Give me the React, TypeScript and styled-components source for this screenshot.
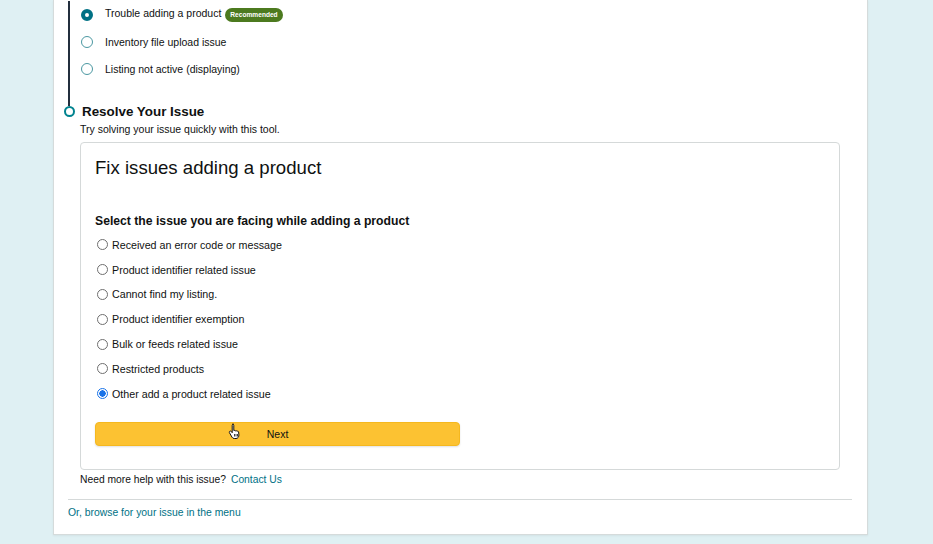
import React from 'react';
import styled, { createGlobalStyle } from 'styled-components';

const GlobalStyle = createGlobalStyle`
  html, body {
    margin: 0;
    padding: 0;
    background: #dff0f3;
  }
  body {
    font-family: "Liberation Sans", Arial, sans-serif;
    color: #0f1111;
  }
`;

const Page = styled.div`
  padding-left: 53px;
  height: 544px;
  overflow: hidden;
`;

const Panel = styled.div`
  width: 784px;
  background: #fff;
  border: 1px solid #d5dbdb;
  border-top: none;
  padding: 1px 15px 13px 14px;
  box-shadow: 0 1px 2px rgba(0, 0, 0, 0.06);
`;

const Timeline = styled.div`
  display: grid;
  grid-template-columns: 2px 1fr;
  column-gap: 10px;
`;

const Rail = styled.div`
  display: flex;
  flex-direction: column;
  align-items: center;
`;

const Line = styled.div<{ $fill?: boolean; $h?: number }>`
  width: 2px;
  background: #232f3e;
  flex: ${(p) => (p.$fill ? '1' : 'none')};
  height: ${(p) => (p.$h ? `${p.$h}px` : 'auto')};
`;

const StepDot = styled.div`
  flex: none;
  width: 11px;
  height: 11px;
  box-sizing: border-box;
  border: 2px solid #00838f;
  border-radius: 50%;
  background: #fff;
`;

const OptionList = styled.div`
  padding-left: 1px;
  padding-bottom: 19px;
`;

const OptionRow = styled.div`
  display: flex;
  align-items: center;
  height: 27px;
  font-size: 10.5px;
  gap: 12px;
`;

const TealRadio = styled.span<{ $on?: boolean }>`
  width: 12px;
  height: 12px;
  box-sizing: border-box;
  border-radius: 50%;
  border: ${(p) => (p.$on ? '4px solid #007185' : '1.5px solid #4b98a2')};
  background: #fff;
  flex: none;
`;

const Badge = styled.span`
  display: inline-flex;
  align-items: center;
  height: 14px;
  padding: 0 5px;
  margin-left: 4px;
  border-radius: 7px;
  background: #4c7a1f;
  color: #fff;
  font-size: 6.6px;
  font-weight: 700;
`;

const StepTitle = styled.div`
  font-size: 13.4px;
  font-weight: 700;
  line-height: 20px;
  padding: 1px 0 0 2px;
`;

const StepSub = styled.div`
  font-size: 10.5px;
  line-height: 14px;
`;

const Card = styled.div`
  margin: 6px 12px 0 0;
  border: 1px solid #d5d9d9;
  border-radius: 4px;
  padding: 13px 14px 23px 14px;
`;

const CardTitle = styled.div`
  font-size: 18.6px;
  line-height: 24px;
`;

const Question = styled.div`
  margin-top: 32px;
  font-size: 12.2px;
  font-weight: 700;
  line-height: 18px;
`;

const ChoiceList = styled.div`
  margin-top: 2.5px;
`;

const Choice = styled.label`
  display: flex;
  align-items: center;
  height: 24.8px;
  padding-left: 2px;
  gap: 4px;
  font-size: 10.7px;
`;

const NativeRadio = styled.span<{ $on?: boolean }>`
  width: 11px;
  height: 11px;
  box-sizing: border-box;
  border-radius: 50%;
  border: 1px solid ${(p) => (p.$on ? '#1a73e8' : '#6f6f6f')};
  background: ${(p) => (p.$on ? 'radial-gradient(circle, #1a73e8 0 3px, #fff 3.4px)' : '#fff')};
  flex: none;
`;

const NextButton = styled.button`
  position: relative;
  display: block;
  margin-top: 15.5px;
  width: 365px;
  height: 24px;
  border: 1px solid #f5b81f;
  border-radius: 4px;
  background: #fcc232;
  box-shadow: 0 1px 2px rgba(0, 0, 0, 0.12);
  font-family: inherit;
  font-size: 10.5px;
  color: #0f1111;
  padding: 0;
`;

const Cursor = styled.svg`
  position: absolute;
  left: 132px;
  top: 0;
  width: 14px;
  height: 16px;
`;

const HelpLine = styled.div`
  margin-top: 2px;
  font-size: 10.3px;
  line-height: 16px;
`;

const Link = styled.a`
  color: #007185;
  text-decoration: none;
  margin-left: 5px;
`;

const Divider = styled.hr`
  margin: 11px 0 0;
  border: none;
  border-top: 1px solid #d5d9d9;
`;

const BrowseLink = styled.a`
  display: block;
  margin-top: 5px;
  font-size: 10.4px;
  line-height: 16px;
  color: #007185;
  text-decoration: none;
`;

const topOptions = [
  { label: 'Trouble adding a product', on: true, badge: true },
  { label: 'Inventory file upload issue' },
  { label: 'Listing not active (displaying)' },
];

const choices = [
  'Received an error code or message',
  'Product identifier related issue',
  'Cannot find my listing.',
  'Product identifier exemption',
  'Bulk or feeds related issue',
  'Restricted products',
  'Other add a product related issue',
];

function App(): React.ReactElement {
  const picked = choices.length - 1;
  return (
    <Page>
      <GlobalStyle />
      <Panel>
        <Timeline>
          <Rail>
            <Line $fill />
          </Rail>
          <OptionList>
            {topOptions.map((o) => (
              <OptionRow key={o.label}>
                <TealRadio $on={o.on} />
                <span>
                  {o.label}
                  {o.badge && <Badge>Recommended</Badge>}
                </span>
              </OptionRow>
            ))}
          </OptionList>

          <Rail>
            <Line $h={5} />
            <StepDot />
          </Rail>
          <div>
            <StepTitle>Resolve Your Issue</StepTitle>
            <StepSub>Try solving your issue quickly with this tool.</StepSub>
            <Card>
              <CardTitle>Fix issues adding a product</CardTitle>
              <Question>Select the issue you are facing while adding a product</Question>
              <ChoiceList>
                {choices.map((c, i) => (
                  <Choice key={c}>
                    <NativeRadio $on={i === picked} />
                    {c}
                  </Choice>
                ))}
              </ChoiceList>
              <NextButton>
                Next
                <Cursor viewBox="0 0 14 16">
                  <path
                    d="M4.5 1.2c.8 0 1.3.6 1.3 1.3v5l.3-.1c.6-.3 1.3 0 1.5.5.5-.3 1.2-.1 1.5.4.5-.3 1.3 0 1.5.6l.3 3c.1 1.8-1 3.6-2.9 3.6H6.3c-1 0-1.8-.5-2.3-1.3L1.5 9.8c-.4-.6-.2-1.3.4-1.6.5-.3 1.1-.1 1.4.3l.9 1.2V2.5c0-.7.5-1.3 1.3-1.3z"
                    fill="#fff"
                    stroke="#111"
                    strokeWidth="1"
                    strokeLinejoin="round"
                  />
                  <path d="M6.5 11v2.5M8 11v2.5M9.5 11v2.5" stroke="#111" strokeWidth="0.8" />
                </Cursor>
              </NextButton>
            </Card>
            <HelpLine>
              Need more help with this issue?
              <Link href="#">Contact Us</Link>
            </HelpLine>
          </div>
        </Timeline>
        <Divider />
        <BrowseLink href="#">Or, browse for your issue in the menu</BrowseLink>
      </Panel>
    </Page>
  );
}

export default App;
